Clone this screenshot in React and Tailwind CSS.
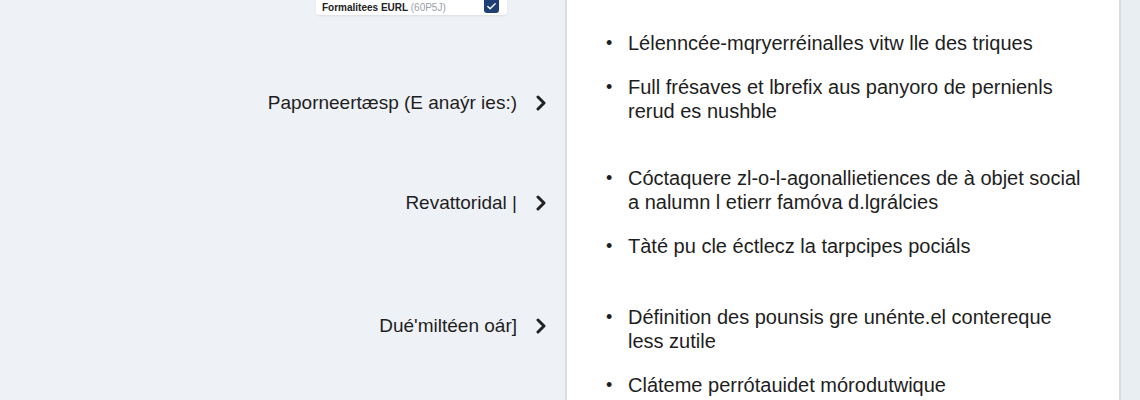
import { Check } from "lucide-react";

const sections = [
  { label: "Paporneertæsp (E anaýr ies:)", mt: "mt-[74px]" },
  { label: "Revattoridal |", mt: "mt-[72px]" },
  { label: "Dué'miltéen oár]", mt: "mt-[95px]" },
];

const groups = [
  {
    mt: "mt-[31px]",
    items: [
      ["Lélenncée-mqryerréinalles vitw lle des triques"],
      ["Full frésaves et lbrefix aus panyoro de pernienls", "rerud es nushble"],
    ],
  },
  {
    mt: "mt-[43px]",
    items: [
      ["Cóctaquere zl-o-l-agonallietiences de à objet social", "a nalumn l etierr famóva d.lgrálcies"],
      ["Tàté pu cle éctlecz la tarpcipes pociáls"],
    ],
  },
  {
    mt: "mt-[47px]",
    items: [
      ["Définition des pounsis gre unénte.el contereque", "less zutile"],
      ["Cláteme perrótauidet mórodutwique"],
    ],
  },
];

function Chevron() {
  return (
    <svg width="12" height="16" viewBox="0 0 12 16" className="ml-[18px] shrink-0">
      <polyline points="3,2 9,8 3,14" fill="none" stroke="#222" strokeWidth="3" strokeLinecap="round" strokeLinejoin="round" />
    </svg>
  );
}

function App() {
  return (
    <div className="flex h-[400px] w-[1140px] overflow-hidden bg-[#eef1f6] font-['Liberation_Sans',Arial,sans-serif] text-[#1e1e1e]">
      {/* left column */}
      <div className="flex w-[565px] shrink-0 flex-col">
        <div className="ml-[316px] flex h-[15px] w-[191px] items-center justify-between rounded-b-[3px] bg-white pl-[6px] pr-[8px] shadow-[0_1px_2px_rgba(0,0,0,0.08)]">
          <span className="text-[10px] font-bold leading-[12px] text-[#222]">
            Formalitees EURL <span className="font-normal text-[#9aa0a8]">(60P5J)</span>
          </span>
          <span className="-mt-[3px] flex h-[14px] w-[15px] items-center justify-center rounded-b-[3px] bg-[#1d3f74]">
            <Check size={11} strokeWidth={3} color="white" />
          </span>
        </div>
        {sections.map((s) => (
          <div key={s.label} className={`${s.mt} flex h-[28px] items-center justify-end pr-[18px]`}>
            <span className="text-[19px] leading-[28px]">{s.label}</span>
            <Chevron />
          </div>
        ))}
      </div>

      {/* right card */}
      <div className="w-[556px] shrink-0 border-x-2 border-[#d9dde2] bg-white pl-[36px]">
        {groups.map((g, gi) => (
          <div key={gi} className={`${g.mt} flex flex-col gap-[20px]`}>
            {g.items.map((lines, i) => (
              <div key={i} className="flex text-[20px] leading-[24px]">
                <span className="w-[25px] shrink-0 pl-[3px] text-[18px]">•</span>
                <div className="flex flex-col">
                  {lines.map((l) => (
                    <span key={l}>{l}</span>
                  ))}
                </div>
              </div>
            ))}
          </div>
        ))}
      </div>
      <div className="flex-1 bg-[#e9eef3]" />
    </div>
  );
}

export default App;
